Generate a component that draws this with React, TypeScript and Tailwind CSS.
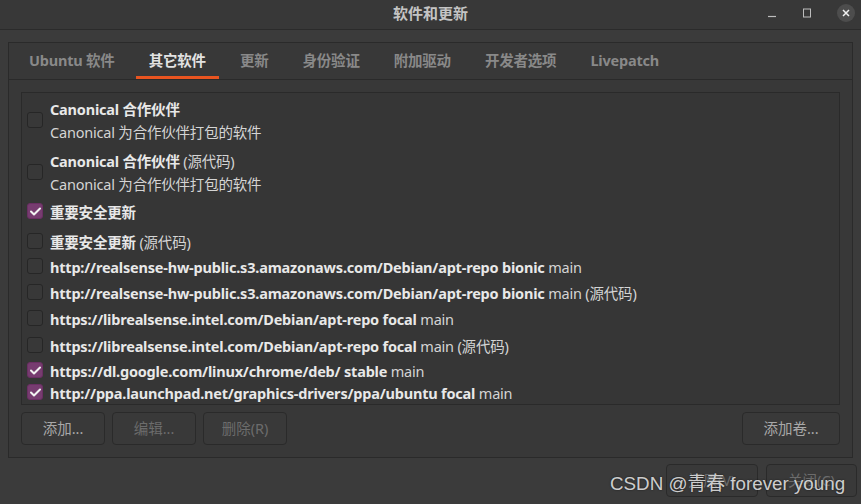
import React from "react";

const FONT = {
  fontFamily: '"Noto Sans", "Noto Sans CJK SC", sans-serif',
};

interface Row {
  title: string;
  extra?: string;
  sub?: string;
  checked?: boolean;
  h: number;
}

const rows: Row[] = [
  { title: "Canonical 合作伙伴", sub: "Canonical 为合作伙伴打包的软件", h: 52 },
  {
    title: "Canonical 合作伙伴",
    extra: "(源代码)",
    sub: "Canonical 为合作伙伴打包的软件",
    h: 51,
  },
  { title: "重要安全更新", checked: true, h: 30 },
  { title: "重要安全更新", extra: "(源代码)", h: 25 },
  {
    title: "http://realsense-hw-public.s3.amazonaws.com/Debian/apt-repo bionic",
    extra: "main",
    h: 26,
  },
  {
    title: "http://realsense-hw-public.s3.amazonaws.com/Debian/apt-repo bionic",
    extra: "main (源代码)",
    h: 26,
  },
  {
    title: "https://librealsense.intel.com/Debian/apt-repo focal",
    extra: "main",
    h: 27,
  },
  {
    title: "https://librealsense.intel.com/Debian/apt-repo focal",
    extra: "main (源代码)",
    h: 25,
  },
  {
    title: "https://dl.google.com/linux/chrome/deb/ stable",
    extra: "main",
    checked: true,
    h: 22,
  },
  {
    title: "http://ppa.launchpad.net/graphics-drivers/ppa/ubuntu focal",
    extra: "main",
    checked: true,
    h: 22,
  },
];

const tabs = [
  "Ubuntu 软件",
  "其它软件",
  "更新",
  "身份验证",
  "附加驱动",
  "开发者选项",
  "Livepatch",
];

function CheckBox({ checked }: { checked?: boolean }) {
  if (checked) {
    return (
      <div className="w-[16px] h-[16px] rounded-[3px] bg-[#773c70] border border-[#6a2f63] flex items-center justify-center shrink-0">
        <svg width="11" height="9" viewBox="0 0 11 9">
          <path
            d="M1 4.5 L4 7.5 L10 1.5"
            stroke="#f2f2f2"
            strokeWidth="2"
            fill="none"
            strokeLinecap="round"
            strokeLinejoin="round"
          />
        </svg>
      </div>
    );
  }
  return (
    <div className="w-[16px] h-[16px] rounded-[3px] bg-[#383838] border border-[#262626] shrink-0" />
  );
}

function Button({
  label,
  disabled,
  w,
}: {
  label: string;
  disabled?: boolean;
  w: string;
}) {
  return (
    <div
      className={`${w} h-[33px] rounded-[4px] border border-[#2a2a2a] bg-[#393939] flex items-center justify-center text-[14.5px] ${
        disabled ? "text-[#6c6c6c]" : "text-[#a8a8a8]"
      }`}
    >
      {label}
    </div>
  );
}

export default function App() {
  return (
    <div
      className="relative w-[861px] h-[504px] bg-[#3b3b3b] flex flex-col overflow-hidden"
      style={FONT}
    >
      {/* title bar */}
      <div className="h-[30px] shrink-0 bg-[#383838] border-b border-[#2b2b2b] grid grid-cols-[1fr_auto_1fr] items-center">
        <div />
        <div className="text-[15px] font-bold text-[#c4c4c4] leading-none -mt-[3px]">
          软件和更新
        </div>
        <div className="flex items-center justify-end gap-[25px] pr-[6px] -mt-[3px]">
          <svg width="10" height="10" viewBox="0 0 10 10">
            <line x1="1" y1="8.5" x2="9" y2="8.5" stroke="#bdbdbd" strokeWidth="1.2" />
          </svg>
          <svg width="10" height="10" viewBox="0 0 10 10">
            <rect x="1.5" y="1" width="7" height="8" stroke="#bdbdbd" strokeWidth="1" fill="none" />
          </svg>
          <div className="w-[18px] h-[18px] rounded-full bg-[#4d4d4d] flex items-center justify-center">
            <svg width="8" height="8" viewBox="0 0 8 8">
              <path d="M1 1 L7 7 M7 1 L1 7" stroke="#f0f0f0" strokeWidth="1.5" />
            </svg>
          </div>
        </div>
      </div>

      {/* notebook */}
      <div className="px-[8px] pt-[12px]">
        <div className="h-[416px] border border-[#2a2a2a] bg-[#383838] flex flex-col">
          <div className="h-[37px] shrink-0 border-b border-[#2a2a2a] flex pl-[7px] gap-[8px]">
            {tabs.map((t, i) => (
              <div
                key={t}
                className={`relative px-[13px] flex items-center text-[14.5px] font-bold tracking-[-0.2px] ${
                  i === 1 ? "text-[#e2e2e2]" : "text-[#898989]"
                }`}
              >
                {t}
                {i === 1 && (
                  <div className="absolute left-0 right-0 bottom-0 h-[3px] bg-[#e95420]" />
                )}
              </div>
            ))}
          </div>

          <div className="p-[12px] flex flex-col flex-1">
            <div className="h-[313px] border border-[#2a2a2a] bg-[#363636] overflow-hidden pt-[6px] pl-[5px]">
              {rows.map((r, i) => (
                <div
                  key={i}
                  className="flex items-start gap-[7px] shrink-0"
                  style={{ height: r.h }}
                >
                  <div className={r.sub ? "mt-[13px]" : "mt-[1px]"}>
                    <CheckBox checked={r.checked} />
                  </div>
                  <div className="flex flex-col text-[14.5px] leading-[20px] whitespace-nowrap tracking-[-0.2px]">
                    <div className="text-[#e8e8e8]">
                      <span className="font-bold">{r.title}</span>
                      {r.extra && (
                        <span className="text-[#d4d4d4]"> {r.extra}</span>
                      )}
                    </div>
                    {r.sub && (
                      <div className="mt-[3px] text-[#d4d4d4]">{r.sub}</div>
                    )}
                  </div>
                </div>
              ))}
            </div>

            <div className="mt-[7px] flex gap-[7px]">
              <Button label="添加..." w="w-[84px]" />
              <Button label="编辑..." w="w-[84px]" disabled />
              <Button label="删除(R)" w="w-[84px]" disabled />
              <div className="flex-1" />
              <Button label="添加卷..." w="w-[98px]" />
            </div>
          </div>
        </div>
      </div>

      {/* dialog buttons */}
      <div className="mt-[6px] flex justify-end gap-[8px] pr-[4px]">
        <Button label="还原(V)" w="w-[92px]" disabled />
        <Button label="关闭(C)" w="w-[91px]" disabled />
      </div>

      {/* watermark */}
      <div
        className="absolute left-[610px] top-[470px] text-[18.8px] leading-[28px] text-[#e4e4e4]/90 whitespace-nowrap"
        style={{
          fontFamily: '"Liberation Sans", "Noto Sans CJK SC", sans-serif',
          textShadow: "0 0 2px rgba(0,0,0,0.6)",
        }}
      >
        CSDN @青春 forever young
      </div>
    </div>
  );
}
